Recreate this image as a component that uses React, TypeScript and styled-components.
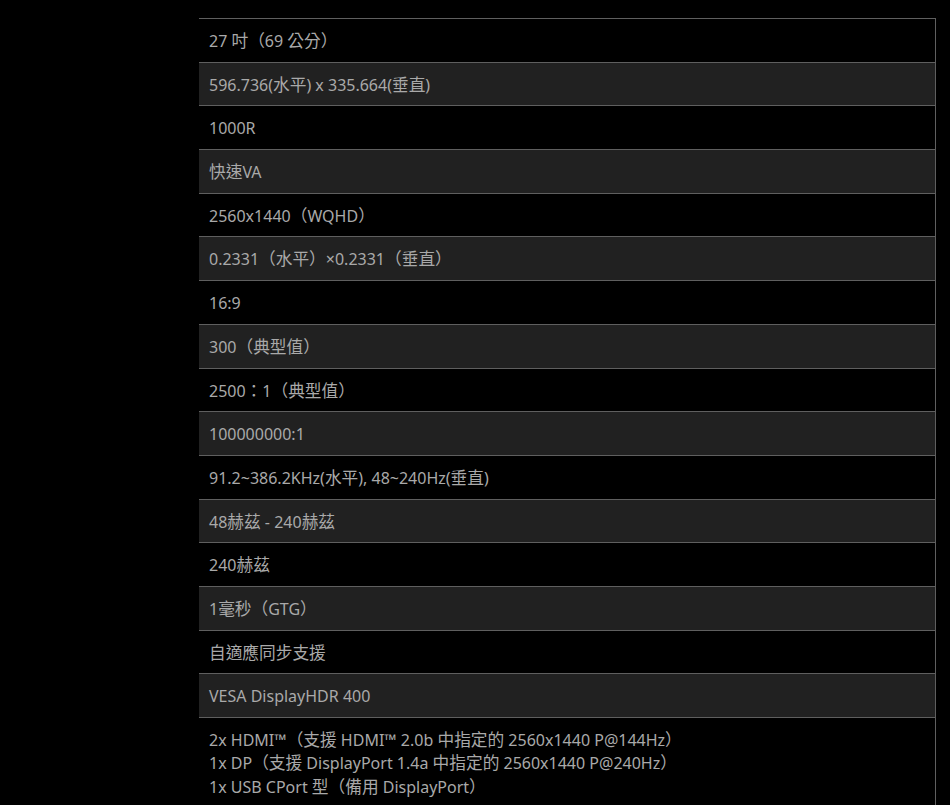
import React from "react";
import styled, { createGlobalStyle } from "styled-components";

const Global = createGlobalStyle`
  html, body {
    margin: 0;
    padding: 0;
    background: #000;
  }
  body {
    font-family: "Noto Sans", "Noto Sans CJK TC", sans-serif;
  }
`;

const Page = styled.div`
  background: #000;
  min-height: 805px;
  padding: 18px 15px 0 199px;
  box-sizing: border-box;
`;

const Table = styled.div`
  display: flex;
  flex-direction: column;
  border-top: 1px solid #5f5f5f;
  border-right: 1px solid #5f5f5f;
  width: 736px;
`;

const Row = styled.div<{ $alt: boolean; $last?: boolean }>`
  background: ${(p) => (p.$alt ? "#212121" : "#000")};
  border-bottom: ${(p) => (p.$last ? "none" : "1px solid #5f5f5f")};
  padding: 11px 10px 8.4px;
  color: #a9a9a9;
  font-size: 16px;
  line-height: 23.3px;
`;

const Line = styled.div`
  white-space: nowrap;
  height: 23.3px;
`;

const Cjk = styled.span`
  font-family: "Noto Sans CJK TC", sans-serif;
  font-size: 16.7px;
  line-height: 16px;
`;

const rows: string[][] = [
  ["27 吋（69 公分）"],
  ["596.736(水平) x 335.664(垂直)"],
  ["1000R"],
  ["快速VA"],
  ["2560x1440（WQHD）"],
  ["0.2331（水平）×0.2331（垂直）"],
  ["16:9"],
  ["300（典型值）"],
  ["2500：1（典型值）"],
  ["100000000:1"],
  ["91.2~386.2KHz(水平), 48~240Hz(垂直)"],
  ["48赫茲 - 240赫茲"],
  ["240赫茲"],
  ["1毫秒（GTG）"],
  ["自適應同步支援"],
  ["VESA DisplayHDR 400"],
  [
    "2x HDMI™（支援 HDMI™ 2.0b 中指定的 2560x1440 P@144Hz）",
    "1x DP（支援 DisplayPort 1.4a 中指定的 2560x1440 P@240Hz）",
    "1x USB CPort 型（備用 DisplayPort）",
  ],
];

const CJK_RE = /([\u3000-\u9fff\uff00-\uffef]+)/;

function Text({ value }: { value: string }) {
  const parts = value.split(CJK_RE);
  return (
    <>
      {parts.map((p, i) =>
        i % 2 === 1 ? <Cjk key={i}>{p}</Cjk> : <React.Fragment key={i}>{p}</React.Fragment>
      )}
    </>
  );
}

export default function App() {
  return (
    <>
      <Global />
      <Page>
        <Table>
          {rows.map((lines, i) => (
            <Row key={i} $alt={i % 2 === 1} $last={i === rows.length - 1}>
              {lines.map((l, j) => (
                <Line key={j}>
                  <Text value={l} />
                </Line>
              ))}
            </Row>
          ))}
        </Table>
      </Page>
    </>
  );
}
